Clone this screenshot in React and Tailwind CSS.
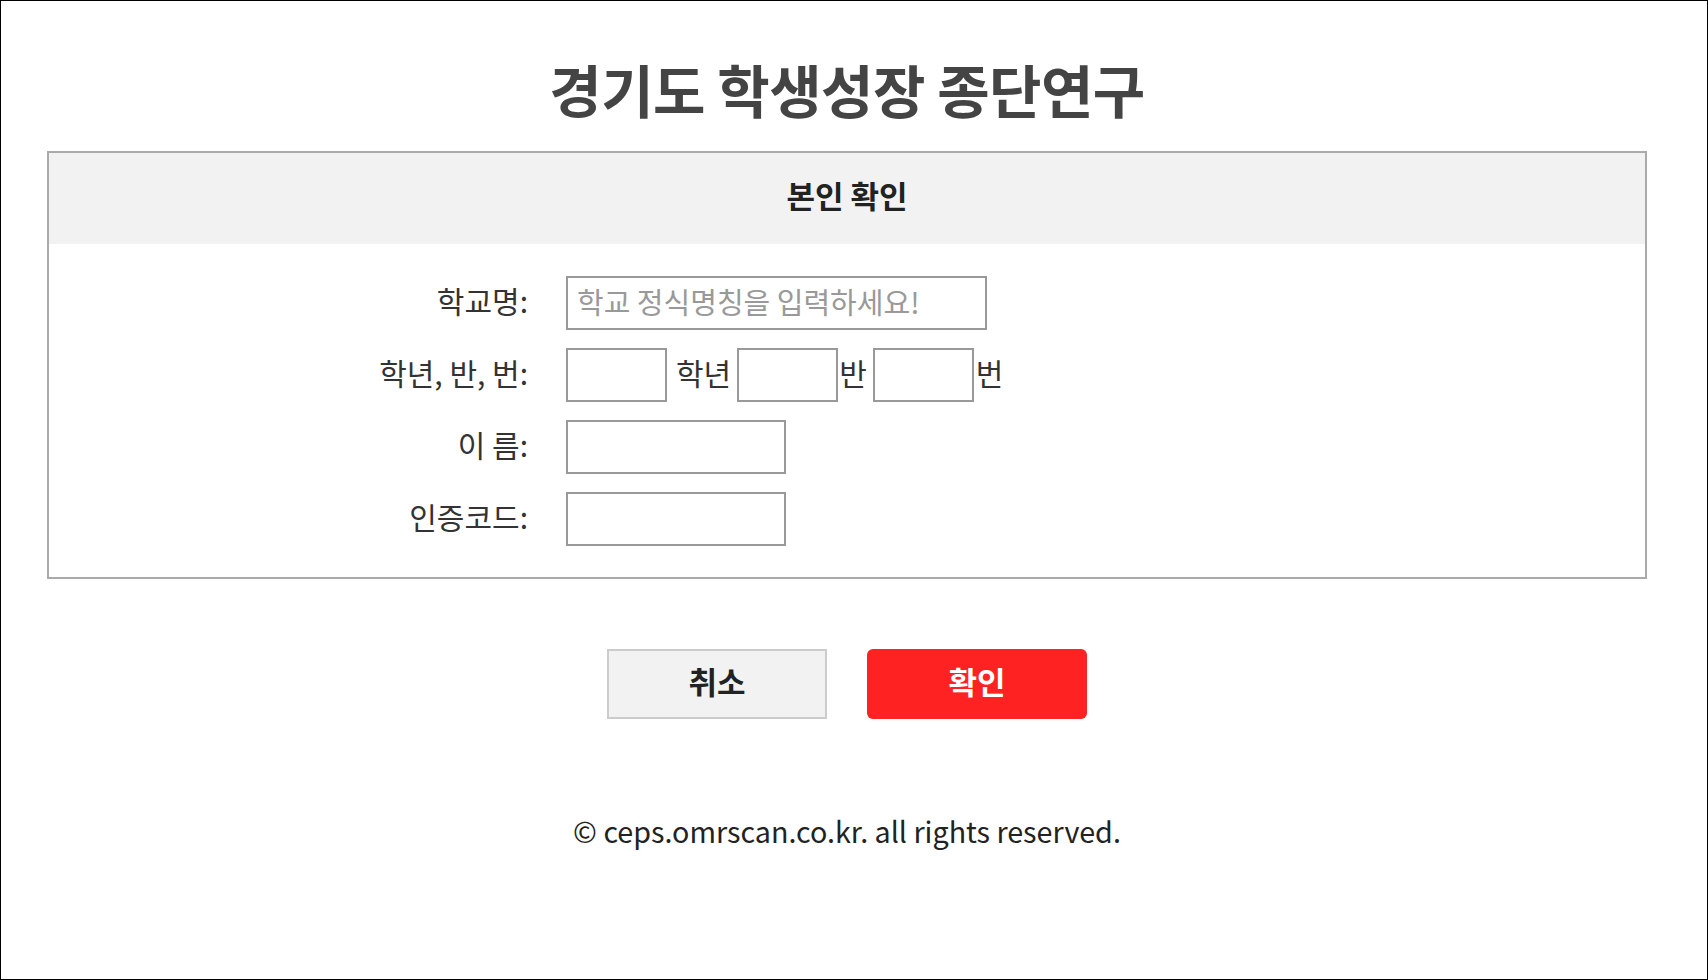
import { useState } from 'react';

const font = "font-['Noto_Sans_CJK_KR','Noto_Sans',sans-serif]";

function Field({ label, children }) {
  return (
    <>
      <div className="text-right text-[30px] leading-[48px] text-[#333]">{label}</div>
      <div className="flex items-center h-[54px]">{children}</div>
    </>
  );
}

function Box({ w, value, onChange, placeholder }) {
  return (
    <input
      value={value}
      onChange={(e) => onChange(e.target.value)}
      placeholder={placeholder}
      className={`${w} h-[54px] border-2 border-[#999] bg-white pl-[9px] pb-[5px] text-[29px] text-[#333] placeholder:text-[#999] outline-none`}
    />
  );
}

function Unit({ children, cls }) {
  return <span className={`${cls} pb-[6px] text-[30px] leading-[48px] text-[#333]`}>{children}</span>;
}

export default function App() {
  const [form, setForm] = useState({ school: '', grade: '', cls: '', num: '', name: '', code: '' });
  const set = (k) => (v) => setForm({ ...form, [k]: v });

  return (
    <div className={`h-[980px] border border-black bg-white ${font}`}>
      <div className="w-[1600px] ml-[46px]">
        <h1 className="pt-[51px] h-[150px] text-center text-[57px] font-bold leading-[72px] tracking-[-0.01em] text-[#444]">
          경기도 학생성장 종단연구
        </h1>

        <div className="border-2 border-[#aaa]">
          <div className="h-[91px] pb-[7px] bg-[#f2f2f2] flex items-center justify-center text-[31px] font-bold text-[#222]">
            본인 확인
          </div>
          <div className="grid grid-cols-[479px_1fr] gap-x-[38px] gap-y-[18px] pt-[32px] pb-[31px]">
            <Field label="학교명:">
              <Box w="w-[421px]" value={form.school} onChange={set('school')} placeholder="학교 정식명칭을 입력하세요!" />
            </Field>
            <Field label="학년, 반, 번:">
              <Box w="w-[101px]" value={form.grade} onChange={set('grade')} />
              <Unit cls="ml-[9px] mr-[6px]">학년</Unit>
              <Box w="w-[101px]" value={form.cls} onChange={set('cls')} />
              <Unit cls="ml-[1px] mr-[6px]">반</Unit>
              <Box w="w-[101px]" value={form.num} onChange={set('num')} />
              <Unit cls="ml-[2px]">번</Unit>
            </Field>
            <Field label="이 름:">
              <Box w="w-[220px]" value={form.name} onChange={set('name')} />
            </Field>
            <Field label="인증코드:">
              <Box w="w-[220px]" value={form.code} onChange={set('code')} />
            </Field>
          </div>
        </div>

        <div className="flex justify-center gap-[40px] mt-[70px]">
          <button className="w-[220px] h-[70px] pb-[6px] bg-[#f2f2f2] border-2 border-[#ccc] text-[31px] font-bold text-[#222]">
            취소
          </button>
          <button className="w-[220px] h-[70px] pb-[6px] bg-[#ff2222] rounded-[6px] text-[31px] font-bold text-white">
            확인
          </button>
        </div>

        <p className="mt-[90px] text-center text-[28.7px] text-[#222]">
          © ceps.omrscan.co.kr. all rights reserved.
        </p>
      </div>
    </div>
  );
}
